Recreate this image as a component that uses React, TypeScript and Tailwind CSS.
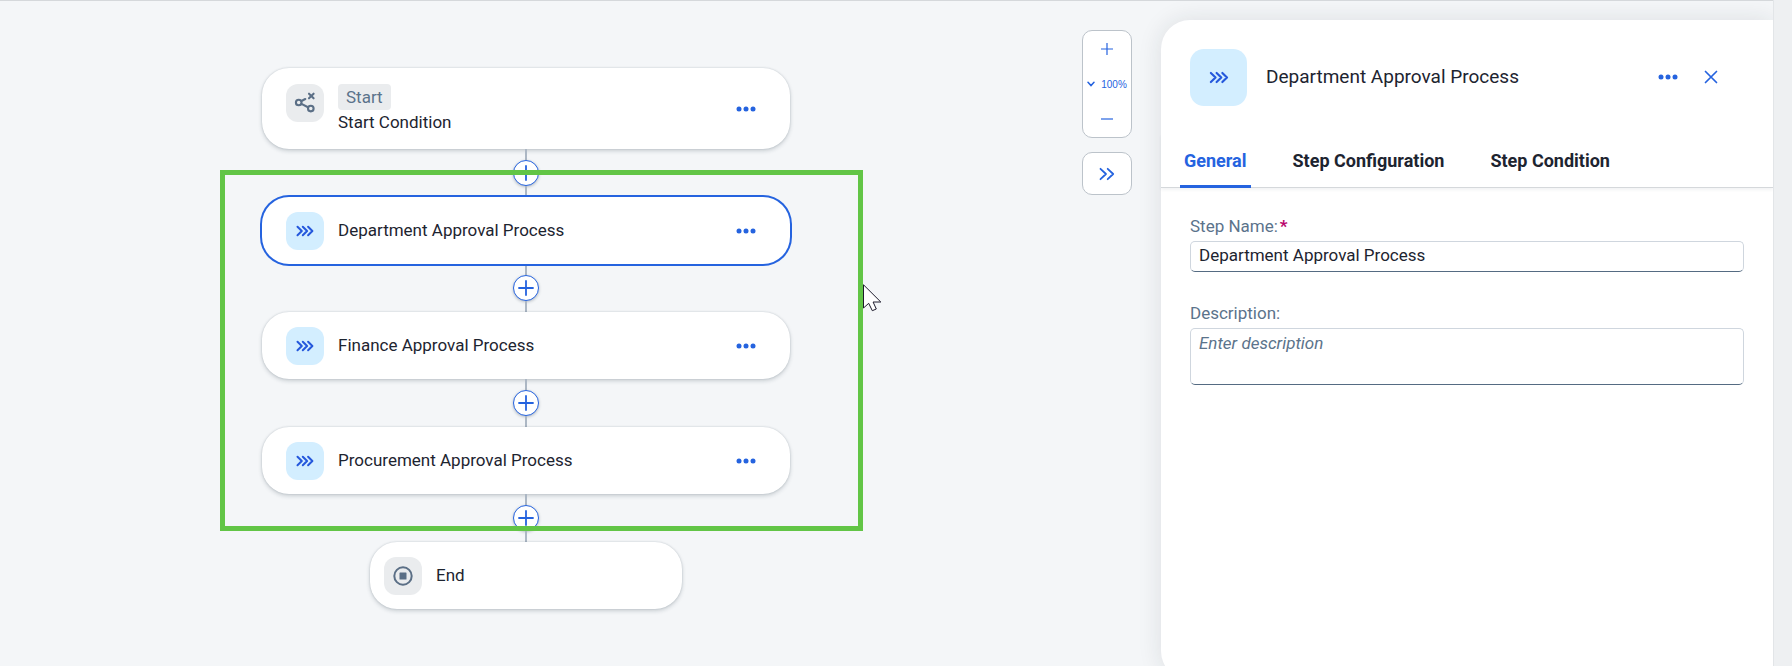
import { useState } from "react";
import type { ReactNode } from "react";

function ChevronsIcon({ className }: { className: string }) {
  return (
    <svg viewBox="0 0 18 12" className={className} fill="none" stroke="currentColor" strokeWidth="2" strokeLinecap="round" strokeLinejoin="round" aria-hidden="true">
      <path d="M1.5 1.8 5.8 6 1.5 10.2M6.8 1.8 11.1 6 6.8 10.2M12.1 1.8 16.4 6 12.1 10.2" />
    </svg>
  );
}

function ConditionIcon() {
  return (
    <svg viewBox="0 0 38 38" className="size-[38px]" fill="none" stroke="currentColor" strokeWidth="2.1" strokeLinecap="round" aria-hidden="true">
      <circle cx="12.7" cy="18.5" r="2.8" />
      <circle cx="24.8" cy="24.6" r="2.8" />
      <path d="M15.5 17 19.3 15M15.5 19.9 22 23.2" />
      <path d="M23 9.7 27.6 14.3M27.6 9.7 23 14.3" />
    </svg>
  );
}

function StopIcon() {
  return (
    <svg viewBox="0 0 20 20" className="size-5" fill="none" stroke="currentColor" strokeWidth="2" aria-hidden="true">
      <circle cx="10" cy="10" r="8.7" />
      <rect x="6.5" y="6.5" width="7" height="7" rx="0.6" fill="currentColor" stroke="none" />
    </svg>
  );
}

function MoreButton({ label }: { label: string }) {
  return (
    <button type="button" aria-label={label} className="flex size-8 items-center justify-center text-[#2563df]">
      <svg viewBox="0 0 20 6" className="h-1.5 w-5" fill="currentColor" aria-hidden="true">
        <circle cx="3" cy="3" r="2.5" />
        <circle cx="10" cy="3" r="2.5" />
        <circle cx="17" cy="3" r="2.5" />
      </svg>
    </button>
  );
}

function Tile({ tone, children }: { tone: "blue" | "gray"; children: ReactNode }) {
  return (
    <span
      className={
        tone === "blue"
          ? "flex size-[38px] shrink-0 items-center justify-center rounded-xl bg-[#d3eeff] text-[#2558dc]"
          : "flex size-[38px] shrink-0 items-center justify-center rounded-xl bg-[#eaecee] text-[#5b6f86]"
      }
    >
      {children}
    </span>
  );
}

function Connector() {
  return (
    <div className="flex h-12 flex-col items-center">
      <span className="w-0.5 flex-1 bg-[#acb7c4]" />
      <button type="button" aria-label="Add step" className="flex size-[26px] items-center justify-center rounded-full border border-[#2563df] bg-white text-[#2563df] shadow-[0_1px_3px_rgba(34,53,72,0.3)]">
        <svg viewBox="0 0 16 16" className="size-4 shrink-0" stroke="currentColor" strokeWidth="1.8" strokeLinecap="round" aria-hidden="true">
          <path d="M8 1v14M1 8h14" />
        </svg>
      </button>
      <span className="w-0.5 flex-1 bg-[#acb7c4]" />
    </div>
  );
}

function StepCard({ name, selected = false }: { name: string; selected?: boolean }) {
  return (
    <div
      className={
        selected
          ? "z-10 flex h-[67px] items-center rounded-[27px] bg-white pr-7 pl-6 ring-2 ring-[#2563df]"
          : "flex h-[67px] items-center rounded-[27px] bg-white pr-7 pl-6 shadow-[0_0_2px_rgba(34,53,72,0.2),0_2px_4px_rgba(34,53,72,0.2)]"
      }
    >
      <Tile tone="blue">
        <ChevronsIcon className="h-3 w-[18px]" />
      </Tile>
      <span className="ml-3.5 flex-1">{name}</span>
      <MoreButton label={"Actions for " + name} />
    </div>
  );
}

function Pointer() {
  return (
    <svg viewBox="0 0 19 28" className="absolute top-[216px] left-[601px] h-7 w-[19px]" fill="#fff" stroke="#1d1b2c" strokeWidth="1" aria-hidden="true">
      <path d="M.5.8V24l5.2-4.7 3.6 7.4 4-1.7-3.2-7h7.7Z" />
    </svg>
  );
}

function Workflow() {
  return (
    <div className="relative flex w-[528px] flex-col">
      <div className="flex h-[81px] items-center rounded-[27px] bg-white pr-7 pl-6 shadow-[0_0_2px_rgba(34,53,72,0.2),0_2px_4px_rgba(34,53,72,0.2)]">
        <div className="flex flex-1 items-start gap-3.5">
          <Tile tone="gray">
            <ConditionIcon />
          </Tile>
          <div className="flex flex-col items-start">
            <span className="rounded bg-[#eaecee] px-2 leading-[26px] text-[#5b738b]">Start</span>
            <span className="leading-6">Start Condition</span>
          </div>
        </div>
        <MoreButton label="Actions for Start Condition" />
      </div>
      <Connector />
      <StepCard name="Department Approval Process" selected />
      <Connector />
      <StepCard name="Finance Approval Process" />
      <Connector />
      <StepCard name="Procurement Approval Process" />
      <Connector />
      <div className="flex h-[67px] w-[312px] items-center gap-3.5 self-center rounded-[27px] bg-white px-3.5 shadow-[0_0_2px_rgba(34,53,72,0.2),0_2px_4px_rgba(34,53,72,0.2)]">
        <Tile tone="gray">
          <StopIcon />
        </Tile>
        <span>End</span>
      </div>
      <div className="pointer-events-none absolute top-[102px] -right-[73px] bottom-[78px] -left-[42px] z-20 border-[5px] border-[#62c546]" />
      <Pointer />
    </div>
  );
}

function Toolbar() {
  return (
    <div className="flex w-[50px] shrink-0 flex-col gap-3.5 pt-[29px] text-[#2563df]">
      <div className="flex h-[108px] flex-col items-center justify-between rounded-[10px] border border-[#bcc3ca] bg-white py-1.5">
        <button type="button" aria-label="Zoom in" className="flex h-6 w-full items-center justify-center">
          <svg viewBox="0 0 12 12" className="size-3" stroke="currentColor" strokeWidth="1.2" aria-hidden="true">
            <path d="M6 0v12M0 6h12" />
          </svg>
        </button>
        <button type="button" className="flex h-6 w-full items-center justify-center gap-1.5 font-['Liberation_Sans',sans-serif] text-[10px]">
          <svg viewBox="0 0 8 6" className="h-1.5 w-2" fill="none" stroke="currentColor" strokeWidth="1.5" strokeLinecap="round" aria-hidden="true">
            <path d="M1 1.2 4 4.6 7 1.2" />
          </svg>
          100%
        </button>
        <button type="button" aria-label="Zoom out" className="flex h-6 w-full items-center justify-center">
          <svg viewBox="0 0 12 12" className="size-3" stroke="currentColor" strokeWidth="1.2" aria-hidden="true">
            <path d="M0 6h12" />
          </svg>
        </button>
      </div>
      <button type="button" aria-label="Collapse panel" className="flex h-[43px] items-center justify-center rounded-[10px] border border-[#bcc3ca] bg-white">
        <svg viewBox="0 0 16 14" className="h-3.5 w-4" fill="none" stroke="currentColor" strokeWidth="1.8" strokeLinecap="round" strokeLinejoin="round" aria-hidden="true">
          <path d="M1.5 1.8 7 7 1.5 12.2M8.7 1.8 14.2 7 8.7 12.2" />
        </svg>
      </button>
    </div>
  );
}

const tabs = ["General", "Step Configuration", "Step Condition"];

function DetailsPanel() {
  const [active, setActive] = useState("General");
  const [name, setName] = useState("Department Approval Process");
  return (
    <aside className="mt-[19px] -mb-3.5 w-[612px] shrink-0 rounded-l-[29px] bg-white shadow-[0_0_24px_rgba(30,40,50,0.11)]">
      <header className="flex h-[114px] items-center pr-[46px] pl-[29px]">
        <span className="flex size-[57px] items-center justify-center rounded-[14px] bg-[#d3eeff] text-[#2558dc]">
          <ChevronsIcon className="h-[13px] w-5" />
        </span>
        <h2 className="ml-[19px] flex-1 text-[19px]">Department Approval Process</h2>
        <div className="flex gap-[11px]">
          <MoreButton label="Step actions" />
          <button type="button" aria-label="Close" className="flex size-8 items-center justify-center text-[#2563df]">
            <svg viewBox="0 0 14 14" className="size-3.5" stroke="currentColor" strokeWidth="1.7" strokeLinecap="round" aria-hidden="true">
              <path d="M1.5 1.5l11 11M12.5 1.5l-11 11" />
            </svg>
          </button>
        </div>
      </header>
      <div role="tablist" className="flex h-[54px] gap-[38px] border-b border-[#d5d8db] pl-[19px] shadow-[0_2px_3px_rgba(34,53,72,0.06)]">
        {tabs.map((tab) => (
          <button
            key={tab}
            type="button"
            role="tab"
            aria-selected={tab === active}
            onClick={() => setActive(tab)}
            className={
              tab === active
                ? "-mb-px border-b-3 border-[#2563df] px-1 pt-0.5 text-lg font-bold text-[#2563df]"
                : "-mb-px border-b-3 border-transparent px-1 pt-0.5 text-lg font-bold"
            }
          >
            {tab}
          </button>
        ))}
      </div>
      <form className="flex flex-col px-[29px] pt-[25px]">
        <label htmlFor="step-name" className="mb-0.5 leading-[26px] text-[#5b738b]">
          Step Name:<span className="ml-0.5 font-bold text-[#ba066c]">*</span>
        </label>
        <input
          id="step-name"
          value={name}
          onChange={(event) => setName(event.target.value)}
          className="h-[31px] rounded-[5px] border border-[#cfd6de] border-b-[#556b82] bg-white px-2 pb-1 outline-none"
        />
        <label htmlFor="description" className="mt-7 mb-0.5 leading-[26px] text-[#5b738b]">
          Description:
        </label>
        <textarea
          id="description"
          placeholder="Enter description"
          className="h-[57px] resize-none rounded-[5px] border border-[#cfd6de] border-b-[#556b82] bg-white px-2 py-0.5 leading-6 outline-none placeholder:text-[#5b738b] placeholder:italic"
        />
      </form>
    </aside>
  );
}

export default function App() {
  return (
    <div className="flex h-screen overflow-hidden bg-[#f4f6f8] font-['Roboto',sans-serif] text-[17px] text-[#1d2430]">
      <div className="flex min-w-0 flex-1 overflow-hidden border-t border-[#d5d8db]">
        <main className="flex min-w-0 flex-1 items-start justify-center pt-[67px]">
          <Workflow />
        </main>
        <div className="flex pr-[29px] pl-[30px]">
          <Toolbar />
        </div>
        <DetailsPanel />
      </div>
      <div className="w-[19px] shrink-0 border-l border-[#e2e5e8] bg-[#eef0f2]" />
    </div>
  );
}
